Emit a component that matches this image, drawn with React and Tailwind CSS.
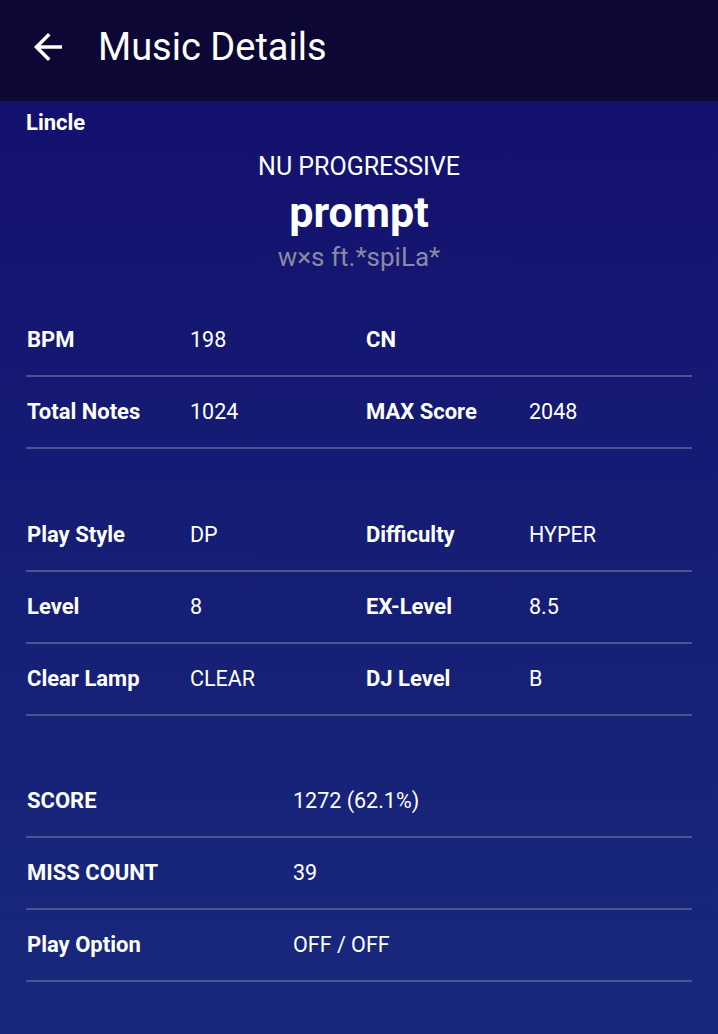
const songInfo = [
  [
    ['BPM', '198', 'CN', ''],
    ['Total Notes', '1024', 'MAX Score', '2048'],
  ],
  [
    ['Play Style', 'DP', 'Difficulty', 'HYPER'],
    ['Level', '8', 'EX-Level', '8.5'],
    ['Clear Lamp', 'CLEAR', 'DJ Level', 'B'],
  ],
];

const scoreInfo = [
  ['SCORE', '1272 (62.1%)'],
  ['MISS COUNT', '39'],
  ['Play Option', 'OFF / OFF'],
];

const QuadRow = ({ row }) => (
  <div className="grid h-[72px] grid-cols-[163px_176px_163px_1fr] content-center items-baseline border-b-2 border-[#4a5491] pl-[1px] leading-[28px]">
    <span className="text-[22px] font-bold">{row[0]}</span>
    <span>{row[1]}</span>
    <span className="text-[22px] font-bold">{row[2]}</span>
    <span>{row[3]}</span>
  </div>
);

const PairRow = ({ label, value }) => (
  <div className="grid h-[72px] grid-cols-[266px_1fr] content-center items-baseline border-b-2 border-[#4a5491] pl-[1px] leading-[28px]">
    <span className="text-[22px] font-bold">{label}</span>
    <span>{value}</span>
  </div>
);

export default function App() {
  return (
    <div
      className="flex h-[1034px] w-[718px] flex-col overflow-hidden bg-gradient-to-b from-[#130d6c] to-[#18297d] text-white"
      style={{ fontFamily: 'Roboto, "Noto Sans", sans-serif' }}
    >
      <header className="flex h-[101px] shrink-0 items-start bg-[#0c0735] pt-[26px]">
        <svg className="ml-[27px] h-[42px] w-[42px]" viewBox="0 0 24 24" fill="currentColor">
          <path d="M20 11H7.83l5.59-5.59L12 4l-8 8 8 8 1.41-1.41L7.83 13H20v-2z" />
        </svg>
        <h1 className="ml-[29px] text-[38px] leading-[42px]">Music Details</h1>
      </header>

      <div className="px-[26px] pt-[9px] text-[21.5px]">
        <div className="text-[22px] font-bold leading-[26px]">Lincle</div>
        <div className="mt-[16px] flex flex-col items-center">
          <div className="text-[25px] leading-[30px]">NU PROGRESSIVE</div>
          <div className="mt-[6px] text-[43px] font-bold leading-[48px]">prompt</div>
          <div className="mt-[6px] text-[26px] leading-[30px] text-[#8a8aa3]">w×s ft.*spiLa*</div>
        </div>

        <div className="mt-[33px]">
          {songInfo[0].map((row) => (
            <QuadRow key={row[0]} row={row} />
          ))}
        </div>

        <div className="mt-[51px]">
          {songInfo[1].map((row) => (
            <QuadRow key={row[0]} row={row} />
          ))}
        </div>

        <div className="mt-[50px]">
          {scoreInfo.map(([label, value]) => (
            <PairRow key={label} label={label} value={value} />
          ))}
        </div>
      </div>
    </div>
  );
}
